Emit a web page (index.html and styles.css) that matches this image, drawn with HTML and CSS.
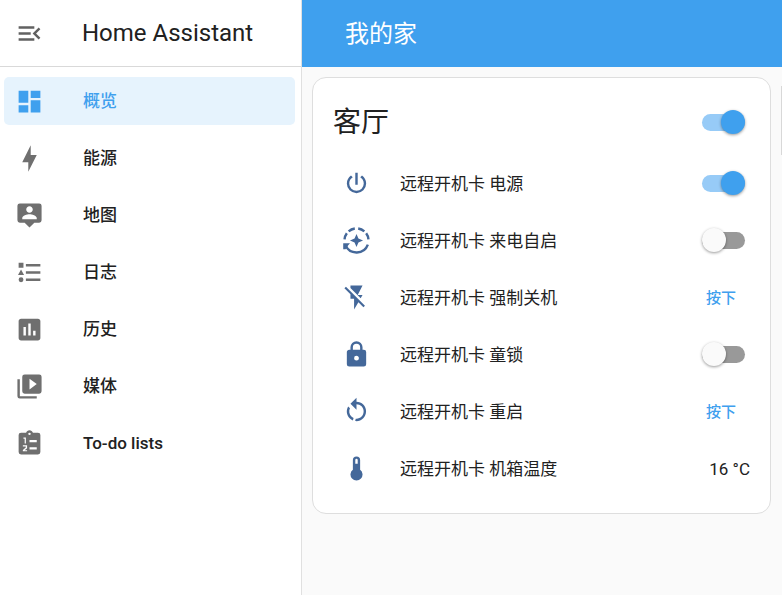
FILE: index.html
```html
<!DOCTYPE html>
<html lang="zh-CN">
<head>
<meta charset="utf-8">
<meta name="viewport" content="width=device-width, initial-scale=1">
<title>Home Assistant</title>
<link rel="stylesheet" href="styles.css">
</head>
<body>
<div class="app">
  <aside class="sidebar">
    <div class="sidebar-header">
      <button class="menu-button" type="button" aria-label="菜单">
        <svg class="icon" viewBox="0 0 24 24"><path d="M21,15.61L19.59,17L14.58,12L19.59,7L21,8.39L17.44,12L21,15.61M3,6H16V8H3V6M3,13V11H13V13H3M3,18V16H16V18H3Z"/></svg>
      </button>
      <span class="brand">Home Assistant</span>
    </div>
    <nav class="nav">
      <a class="nav-item active" href="#overview" aria-current="page">
        <svg class="icon" viewBox="0 0 24 24"><path d="M13,3V9H21V3M13,21H21V11H13M3,21H11V15H3M3,13H11V3H3V13Z"/></svg>
        <span>概览</span>
      </a>
      <a class="nav-item" href="#energy">
        <svg class="icon" viewBox="0 0 24 24"><path d="M11 15H6L13 1V9H18L11 23V15Z"/></svg>
        <span>能源</span>
      </a>
      <a class="nav-item" href="#map">
        <svg class="icon" viewBox="0 0 24 24"><path d="M20,2H4A2,2 0 0,0 2,4V16A2,2 0 0,0 4,18H8L12,22L16,18H20A2,2 0 0,0 22,16V4A2,2 0 0,0 20,2M12,4.3C13.5,4.3 14.7,5.5 14.7,7C14.7,8.5 13.5,9.7 12,9.7C10.5,9.7 9.3,8.5 9.3,7C9.3,5.5 10.5,4.3 12,4.3M18,15H6V14.1C6,12.1 10,11 12,11C14,11 18,12.1 18,14.1V15Z"/></svg>
        <span>地图</span>
      </a>
      <a class="nav-item" href="#logbook">
        <svg class="icon" viewBox="0 0 24 24"><path d="M5,9.5L7.5,14H2.5L5,9.5M3,4H7V8H3V4M5,20A2,2 0 0,0 7,18A2,2 0 0,0 5,16A2,2 0 0,0 3,18A2,2 0 0,0 5,20M9,5V7H21V5H9M9,19H21V17H9V19M9,13H21V11H9V13Z"/></svg>
        <span>日志</span>
      </a>
      <a class="nav-item" href="#history">
        <svg class="icon" viewBox="0 0 24 24"><path d="M9 17H7V10H9V17M13 17H11V7H13V17M17 17H15V13H17V17M19 3H5C3.9 3 3 3.9 3 5V19C3 20.1 3.9 21 5 21H19C20.1 21 21 20.1 21 19V5C21 3.9 20.1 3 19 3Z"/></svg>
        <span>历史</span>
      </a>
      <a class="nav-item" href="#media">
        <svg class="icon" viewBox="0 0 24 24"><path d="M4,6H2V20A2,2 0 0,0 4,22H18V20H4V6M20,2H8A2,2 0 0,0 6,4V16A2,2 0 0,0 8,18H20A2,2 0 0,0 22,16V4A2,2 0 0,0 20,2M12,14.5V5.5L18,10L12,14.5Z"/></svg>
        <span>媒体</span>
      </a>
      <a class="nav-item" href="#todo">
        <svg class="icon" viewBox="0 0 24 24"><path fill-rule="evenodd" d="M19,3H14.82C14.4,1.84 13.3,1 12,1S9.6,1.84 9.18,3H5A2,2 0 0,0 3,5V19A2,2 0 0,0 5,21H19A2,2 0 0,0 21,19V5A2,2 0 0,0 19,3M12,3A1,1 0 0,1 12,5A1,1 0 0,1 12,3M12,9H18V11H12ZM12,15H18V17H12ZM7,7H9V12H8V8H7ZM6.5,13.5H10V16L8,17.5H10V18.5H6.5V17.3L8.9,15.4V14.5H6.5Z"/></svg>
        <span>To-do lists</span>
      </a>
    </nav>
  </aside>

  <main class="main">
    <header class="toolbar"><h1>我的家</h1></header>
    <div class="view">
      <section class="card">
        <div class="card-header">
          <h2 id="room">客厅</h2>
          <input class="switch" type="checkbox" role="switch" aria-labelledby="room" checked>
        </div>
        <div class="row">
          <svg class="icon" viewBox="0 0 24 24"><path d="M16.56,5.44L15.11,6.89C16.84,7.94 18,9.83 18,12A6,6 0 0,1 12,18A6,6 0 0,1 6,12C6,9.83 7.16,7.94 8.88,6.88L7.44,5.44C5.36,6.88 4,9.28 4,12A8,8 0 0,0 12,20A8,8 0 0,0 20,12C20,9.28 18.64,6.88 16.56,5.44M13,3H11V13H13"/></svg>
          <label class="name" for="power">远程开机卡 电源</label>
          <input class="switch" type="checkbox" role="switch" id="power" checked>
        </div>
        <div class="row">
          <svg class="icon" viewBox="0 0 24 24"><g fill="none" stroke="currentColor" stroke-width="2"><path d="M2.9 16A10 10 0 0 0 21.4 15.4M2.1 11A10 10 0 0 1 4 6M5.5 4.5A10 10 0 0 1 10.6 2.1M13.4 2.1A10 10 0 0 1 18.5 4.5M20 6A10 10 0 0 1 21.9 11"/></g><path d="M1 14.2H6.6L5 16.1L3 19.2H1ZM12 6.6L13.6 10.4L17.4 12L13.6 13.6L12 17.4L10.4 13.6L6.6 12L10.4 10.4Z"/></svg>
          <label class="name" for="auto">远程开机卡 来电自启</label>
          <input class="switch" type="checkbox" role="switch" id="auto">
        </div>
        <div class="row">
          <svg class="icon" viewBox="0 0 24 24"><path d="M17,10H13L17,2H7V4.18L15.46,12.64M3.27,3L2,4.27L7,9.27V13H10V22L13.58,15.86L17.73,20L19,18.73L3.27,3Z"/></svg>
          <span class="name" id="force">远程开机卡 强制关机</span>
          <button class="press" type="button" aria-describedby="force">按下</button>
        </div>
        <div class="row">
          <svg class="icon" viewBox="0 0 24 24"><path d="M12,17A2,2 0 0,0 14,15C14,13.89 13.1,13 12,13A2,2 0 0,0 10,15A2,2 0 0,0 12,17M18,8A2,2 0 0,1 20,10V20A2,2 0 0,1 18,22H6A2,2 0 0,1 4,20V10C4,8.89 4.9,8 6,8H7V6A5,5 0 0,1 12,1A5,5 0 0,1 17,6V8H18M12,3A3,3 0 0,0 9,6V8H15V6A3,3 0 0,0 12,3Z"/></svg>
          <label class="name" for="lock">远程开机卡 童锁</label>
          <input class="switch" type="checkbox" role="switch" id="lock">
        </div>
        <div class="row">
          <svg class="icon" viewBox="0 0 24 24"><path d="M12,4C14.1,4 16.1,4.8 17.6,6.3C20.7,9.4 20.7,14.5 17.6,17.6C15.8,19.5 13.3,20.2 10.9,19.9L11.4,17.9C13.1,18.1 14.9,17.5 16.2,16.2C18.5,13.9 18.5,10.1 16.2,7.7C15.1,6.6 13.5,6 12,6V10.6L7,5.6L12,0.6V4M6.3,17.6C3.7,15 3.3,11 5.1,7.9L6.6,9.4C5.5,11.6 5.9,14.4 7.8,16.2C8.3,16.7 8.9,17.1 9.6,17.4L9,19.4C8,19 7.1,18.4 6.3,17.6Z"/></svg>
          <span class="name" id="restart">远程开机卡 重启</span>
          <button class="press" type="button" aria-describedby="restart">按下</button>
        </div>
        <div class="row">
          <svg class="icon" viewBox="0 0 24 24"><path d="M15 13V5A3 3 0 0 0 9 5V13A5 5 0 1 0 15 13M12 4A1 1 0 0 1 13 5V8H11V5A1 1 0 0 1 12 4Z"/></svg>
          <span class="name">远程开机卡 机箱温度</span>
          <span class="value">16 °C</span>
        </div>
      </section>
    </div>
  </main>
</div>
</body>
</html>
```
FILE: styles.css
```css
* {
  box-sizing: border-box;
}

body {
  margin: 0;
  font-family: Roboto, "Noto Sans CJK SC", sans-serif;
  font-size: 17px;
  line-height: 24px;
  color: #212121;
  background: #fafafa;
}

h1,
h2 {
  margin: 0;
  font-weight: 400;
}

.app {
  display: flex;
  min-height: 100vh;
}

.icon {
  flex: none;
  width: 29px;
  height: 29px;
  fill: currentColor;
}

.sidebar {
  flex: none;
  width: 302px;
  background: #fff;
  border-right: 1px solid #e0e0e0;
}

.sidebar-header {
  display: flex;
  align-items: center;
  gap: 38px;
  height: 67px;
  padding: 0 15px;
  border-bottom: 1px solid #d9d9d9;
}

.menu-button {
  display: flex;
  padding: 0;
  border: 0;
  background: none;
  color: #616161;
}

.brand {
  font-size: 24px;
}

.nav {
  display: flex;
  flex-direction: column;
  gap: 9px;
  padding: 10px 6px 10px 4px;
}

.nav-item {
  display: flex;
  align-items: center;
  gap: 39px;
  height: 48px;
  padding: 0 11px;
  border-radius: 5px;
  color: #212121;
  font-weight: 500;
  text-decoration: none;
}

.nav-item .icon {
  color: #6f6f6f;
}

.nav-item.active {
  background: #e6f3fd;
}

.nav-item.active,
.nav-item.active .icon {
  color: #3fa0ee;
}

.main {
  flex: 1;
  min-width: 0;
}

.toolbar {
  display: flex;
  align-items: center;
  height: 67px;
  padding: 0 43px;
  background: #3fa0ee;
  color: #fff;
}

.toolbar h1 {
  font-size: 24px;
}

.view {
  position: relative;
  padding: 10px 11px 10px 10px;
}

.view::after {
  content: "";
  position: absolute;
  top: 19px;
  right: 0;
  width: 1px;
  height: 69px;
  background: #d8d8d8;
}

.card {
  padding: 16px 20px;
  background: #fff;
  border: 1px solid #dedede;
  border-radius: 14px;
}

.card-header {
  display: flex;
  align-items: center;
  justify-content: space-between;
  height: 57px;
  margin-bottom: 4px;
}

.card-header h2 {
  font-size: 28px;
  line-height: 40px;
}

.row {
  display: flex;
  align-items: center;
  height: 57px;
}

.row .icon {
  margin: 0 29px 0 9px;
  color: #44689a;
}

.name {
  flex: 1;
}

.switch {
  appearance: none;
  position: relative;
  flex: none;
  width: 43px;
  height: 17px;
  margin: 0 5px;
  border-radius: 9px;
  background: #999;
}

.switch::before {
  content: "";
  position: absolute;
  top: -4px;
  left: 0;
  width: 24px;
  height: 24px;
  border-radius: 50%;
  background: #fafafa;
  box-shadow: 0 1px 3px rgba(0, 0, 0, 0.4);
}

.switch:checked {
  background: #97cbf7;
}

.switch:checked::before {
  right: 0;
  left: auto;
  background: #3fa0ee;
}

.press {
  padding: 8px 14px;
  border: 0;
  background: none;
  color: #3fa0ee;
  font: inherit;
  font-size: 15px;
  font-weight: 500;
}
```
